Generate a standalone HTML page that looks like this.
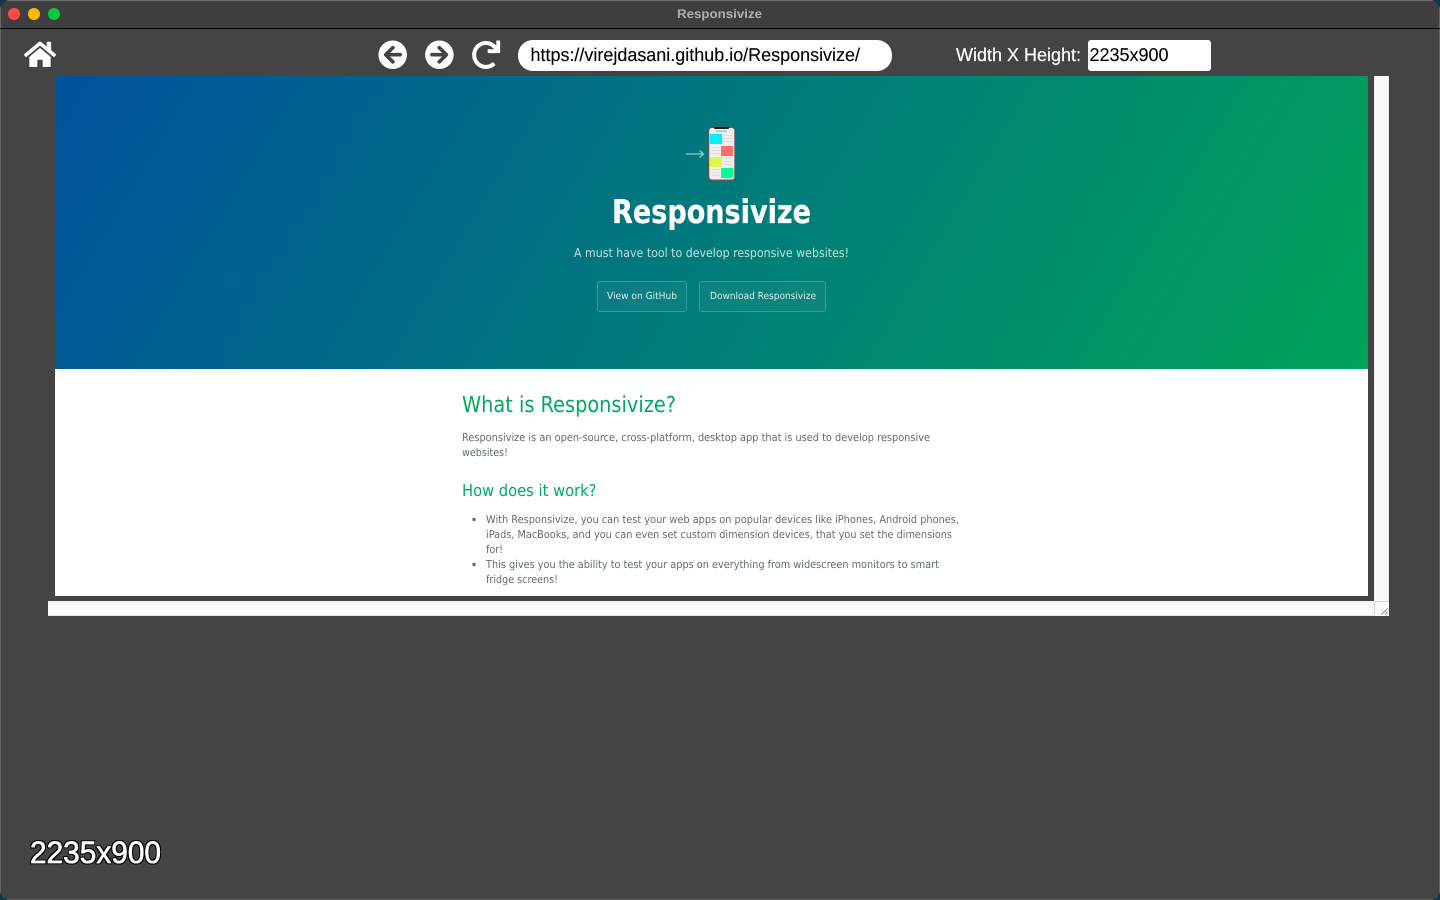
<!DOCTYPE html>
<html lang="en">
<head>
<meta charset="utf-8">
<title>Responsivize</title>
<style>
html,body{margin:0;padding:0;width:1440px;height:900px;overflow:hidden;background:#0d3b3f}
svg{position:absolute;left:0;top:0;display:block;text-rendering:geometricPrecision}
.o{font-family:"DejaVu Sans","Liberation Sans",sans-serif}
.h{font-family:"Liberation Sans",Arial,sans-serif}
</style>
</head>
<body>
<svg width="1440" height="900" viewBox="0 0 1440 900" xmlns="http://www.w3.org/2000/svg">
<defs>
<linearGradient id="hero" gradientUnits="userSpaceOnUse" x1="170" y1="-100" x2="1253" y2="545">
<stop offset="0" stop-color="#00529c"/>
<stop offset="1" stop-color="#00a35a"/>
</linearGradient>
<clipPath id="win"><rect x="0" y="0" width="1440" height="900" rx="10"/></clipPath>
<filter id="sh" x="-10%" y="-20%" width="120%" height="140%"><feMorphology in="SourceAlpha" operator="dilate" radius="1" result="d"/><feGaussianBlur in="d" stdDeviation=".3" result="b"/><feFlood flood-color="#000" result="f"/><feComposite in="f" in2="b" operator="in" result="o"/><feMerge><feMergeNode in="o"/><feMergeNode in="SourceGraphic"/></feMerge></filter>
</defs>
<g clip-path="url(#win)">
<rect width="1440" height="900" fill="#444444"/>
<rect width="1440" height="28" fill="#3d3e3d"/>
<rect y="0" width="1440" height="1" fill="#6e6e6e"/>
<rect y="1" width="1" height="899" fill="#666"/>
<rect x="1439" y="1" width="1" height="899" fill="#666"/>
<rect y="899" width="1440" height="1" fill="#5c5c5c"/>
<rect y="28" width="1440" height="1" fill="#000"/>
</g>
<circle cx="14" cy="14" r="6" fill="#ff4b47"/>
<circle cx="34" cy="14" r="6" fill="#ffb900"/>
<circle cx="54" cy="14" r="6" fill="#00ca3e"/>
<text class="h" x="677" y="18" font-size="12.5" font-weight="700" fill="#b0b0b0" textLength="85" lengthAdjust="spacingAndGlyphs">Responsivize</text>

<!-- home -->
<g transform="translate(24 39.9) scale(.0556 .0565)" fill="#fff"><path d="M280.37 148.26L96 300.11V464a16 16 0 0 0 16 16l112.06-.29a16 16 0 0 0 15.92-16V368a16 16 0 0 1 16-16h64a16 16 0 0 1 16 16v95.64a16 16 0 0 0 16 16.05L464 480a16 16 0 0 0 16-16V300L295.67 148.26a12.19 12.19 0 0 0-15.3 0zM571.6 251.47L488 182.56V44.05a12 12 0 0 0-12-12h-56a12 12 0 0 0-12 12v72.61L318.47 43a48 48 0 0 0-61 0L4.34 251.47a12 12 0 0 0-1.6 16.9l25.5 31A12 12 0 0 0 45.15 301l235.22-193.74a12.19 12.19 0 0 1 15.3 0L530.9 301a12 12 0 0 0 16.9-1.6l25.5-31a12 12 0 0 0-1.7-16.93z"/></g>
<!-- back -->
<g transform="translate(378 40) scale(.0575)" fill="#fff"><path d="M256 504C119 504 8 393 8 256S119 8 256 8s248 111 248 248-111 248-248 248zm28.9-143.6L209.4 288H392c13.3 0 24-10.7 24-24v-16c0-13.3-10.7-24-24-24H209.4l75.5-72.4c9.7-9.3 9.9-24.8.4-34.3l-11-10.9c-9.4-9.4-24.6-9.4-33.9 0L107.7 239c-9.4 9.4-9.4 24.6 0 33.9l132.7 132.7c9.4 9.4 24.6 9.4 33.9 0l11-10.9c9.5-9.5 9.3-25-.4-34.3z"/></g>
<!-- forward -->
<g transform="translate(424.7 40) scale(.0575)" fill="#fff"><path d="M256 8c137 0 248 111 248 248S393 504 256 504 8 393 8 256 119 8 256 8zm-28.9 143.6l75.5 72.4H120c-13.3 0-24 10.7-24 24v16c0 13.3 10.7 24 24 24h182.6l-75.5 72.4c-9.7 9.3-9.9 24.8-.4 34.3l11 10.9c9.4 9.4 24.6 9.4 33.9 0L404.3 273c9.4-9.4 9.4-24.6 0-33.9L271.6 106.3c-9.4-9.4-24.6-9.4-33.9 0l-11 10.9c-9.5 9.6-9.3 25.1.4 34.4z"/></g>
<!-- reload -->
<g transform="translate(471.7 40.5) scale(.0555 .0565)" fill="#fff"><path d="M500.33 0h-47.41a12 12 0 0 0-12 12.57l4 82.76A247.42 247.42 0 0 0 256 8C119.34 8 7.9 119.53 8 256.19 8.1 393.07 119.1 504 256 504a247.1 247.1 0 0 0 166.18-63.91 12 12 0 0 0 .48-17.43l-34-34a12 12 0 0 0-16.38-.55A176 176 0 1 1 402.1 157.8l-101.53-4.87a12 12 0 0 0-12.57 12v47.41a12 12 0 0 0 12 12h200.33a12 12 0 0 0 12-12V12a12 12 0 0 0-12-12z"/></g>

<!-- url bar -->
<rect x="518" y="40" width="374" height="31" rx="15" fill="#fff"/>
<text class="h" x="530.5" y="61" font-size="18.5" fill="#000" stroke="#000" stroke-width=".12" textLength="329.500" lengthAdjust="spacingAndGlyphs">https://virejdasani.github.io/Responsivize/</text>
<text class="h" x="956" y="61" font-size="18.5" fill="#fff" stroke="#fff" stroke-width=".2" textLength="125" lengthAdjust="spacingAndGlyphs">Width X Height:</text>
<rect x="1088" y="40" width="123" height="31" rx="3" fill="#fff"/>
<text class="h" x="1089.5" y="61" font-size="18.5" fill="#000" stroke="#000" stroke-width=".12" textLength="79" lengthAdjust="spacingAndGlyphs">2235x900</text>

<!-- scrollbars -->
<rect x="1374" y="76" width="15" height="525" fill="#fafafa"/>
<rect x="1374" y="76" width="1" height="525" fill="#ececec"/>
<rect x="1388" y="76" width="1" height="525" fill="#e8e8e8"/>
<rect x="48" y="601" width="1326" height="15" fill="#fafafa"/>
<rect x="48" y="601" width="1326" height="1" fill="#ececec"/>
<rect x="48" y="615" width="1326" height="1" fill="#e8e8e8"/>
<rect x="1374" y="601" width="15" height="15" fill="#fafafa"/>
<rect x="1374" y="601" width="15" height="1" fill="#d8d8d8"/>
<rect x="1374" y="601" width="1" height="15" fill="#d8d8d8"/>
<path d="M1381.5 614.5l6-6M1385.5 614.5l2-2" stroke="#555" stroke-width="1" stroke-dasharray="1 .6" fill="none"/>

<!-- page content -->
<rect x="55" y="369" width="1313" height="227" fill="#fff"/>
<rect x="55" y="76" width="1313" height="293" fill="url(#hero)"/>

<!-- logo arrow -->
<path d="M686 154H703M699.5 150.5L703.5 154L699.5 157.5" stroke="#8fd0cb" stroke-width="1.3" fill="none"/>
<!-- phone -->
<rect x="708" y="126.500" width="27.500" height="54.500" rx="4" fill="#5a5a5a"/>
<rect x="709.300" y="128" width="25" height="51.500" rx="2.500" fill="#efefef"/>
<rect x="714" y="127" width="15" height="2" rx="1" fill="#222"/>
<rect x="716" y="130.500" width="11" height="1.500" fill="#bbb"/>
<rect x="710" y="134" width="12" height="10" fill="#00f0ff"/>
<rect x="721" y="146" width="12" height="10" fill="#ff6b6e"/>
<rect x="710" y="157" width="12" height="10" fill="#e6f64a"/>
<rect x="721" y="168" width="12" height="10" fill="#00ff90"/>
<g fill="#dedede">
<rect x="723" y="135" width="9" height="1"/><rect x="723" y="138" width="9" height="1"/><rect x="723" y="141" width="9" height="1"/>
<rect x="711" y="147" width="9" height="1"/><rect x="711" y="150" width="9" height="1"/><rect x="711" y="153" width="9" height="1"/>
<rect x="723" y="158" width="9" height="1"/><rect x="723" y="161" width="9" height="1"/><rect x="723" y="164" width="9" height="1"/>
<rect x="711" y="169" width="9" height="1"/><rect x="711" y="172" width="9" height="1"/><rect x="711" y="175" width="9" height="1"/>
</g>

<text class="o" x="612" y="223" font-size="32.500" font-weight="700" fill="#fff" stroke="#fff" stroke-width=".3" textLength="199" lengthAdjust="spacingAndGlyphs">Responsivize</text>
<text class="o" x="574" y="257" font-size="12.300" fill="#fff" fill-opacity=".75" textLength="275" lengthAdjust="spacingAndGlyphs">A must have tool to develop responsive websites!</text>

<rect x="597.500" y="281.500" width="89" height="30" rx="2.500" fill="#fff" fill-opacity=".045" stroke="#4fc4b8" stroke-opacity=".5"/>
<text class="o" x="607" y="299" font-size="9.700" fill="#fff" fill-opacity=".85" textLength="70" lengthAdjust="spacingAndGlyphs">View on GitHub</text>
<rect x="699.500" y="281.500" width="126" height="30" rx="2.500" fill="#fff" fill-opacity=".045" stroke="#4fc4b8" stroke-opacity=".5"/>
<text class="o" x="710" y="299" font-size="9.700" fill="#fff" fill-opacity=".85" textLength="106" lengthAdjust="spacingAndGlyphs">Download Responsivize</text>

<text class="o" x="462" y="412" font-size="22" fill="#00a862" textLength="214" lengthAdjust="spacingAndGlyphs">What is Responsivize?</text>
<g class="o" font-size="10.800" fill="#606c71">
<text x="462" y="441" textLength="468" lengthAdjust="spacingAndGlyphs">Responsivize is an open-source, cross-platform, desktop app that is used to develop responsive</text>
<text x="462" y="456" textLength="46" lengthAdjust="spacingAndGlyphs">websites!</text>
<text x="486" y="523" textLength="473" lengthAdjust="spacingAndGlyphs">With Responsivize, you can test your web apps on popular devices like iPhones, Android phones,</text>
<text x="486" y="538" textLength="466" lengthAdjust="spacingAndGlyphs">iPads, MacBooks, and you can even set custom dimension devices, that you set the dimensions</text>
<text x="486" y="553" textLength="17" lengthAdjust="spacingAndGlyphs">for!</text>
<text x="486" y="568" textLength="453" lengthAdjust="spacingAndGlyphs">This gives you the ability to test your apps on everything from widescreen monitors to smart</text>
<text x="486" y="583" textLength="72" lengthAdjust="spacingAndGlyphs">fridge screens!</text>
</g>
<text class="o" x="462" y="496" font-size="16.300" fill="#00a862" textLength="134.500" lengthAdjust="spacingAndGlyphs">How does it work?</text>
<circle cx="474" cy="519.500" r="1.700" fill="#606c71"/>
<circle cx="474" cy="564.500" r="1.700" fill="#606c71"/>

<text class="h" x="30" y="863" font-size="31" fill="#fff" stroke="#fff" stroke-width=".5" filter="url(#sh)" textLength="131" lengthAdjust="spacingAndGlyphs">2235x900</text>
</svg>
</body>
</html>
